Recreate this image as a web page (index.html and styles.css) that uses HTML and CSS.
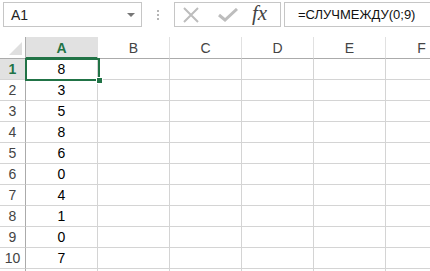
FILE: index.html
```html
<!DOCTYPE html>
<html lang="ru">
<head>
    <meta charset="UTF-8">
    <title>СЛУЧМЕЖДУ</title>
    <link rel="stylesheet" href="styles.css">
</head>
<body>
    <div class="formula-bar">
        <div class="name-box">
            <span class="name-text">A1</span>
            <span class="name-arrow"></span>
        </div>
        <div class="grip">
            <span></span><span></span><span></span>
        </div>
        <div class="buttons-box">
            <svg class="icon-cancel" width="18" height="16" viewBox="0 0 18 16">
                <path d="M2 1 L16 15 M16 1 L2 15" stroke="#bdbdbd" stroke-width="2" fill="none"/>
            </svg>
            <svg class="icon-enter" width="20" height="14" viewBox="0 0 20 14">
                <path d="M1 7 L7 12 L19 1" stroke="#bdbdbd" stroke-width="3" fill="none"/>
            </svg>
            <span class="fx">fx</span>
        </div>
        <div class="formula-input">=СЛУЧМЕЖДУ(0;9)</div>
    </div>

    <div class="sheet">
        <div class="grid">
            <div class="corner"><span class="corner-tri"></span></div>
            <div class="col-head selected">A</div>
            <div class="col-head">B</div>
            <div class="col-head">C</div>
            <div class="col-head">D</div>
            <div class="col-head">E</div>
            <div class="col-head">F</div>

            <div class="row-head selected">1</div><div class="cell num">8</div><div class="cell"></div><div class="cell"></div><div class="cell"></div><div class="cell"></div><div class="cell"></div>
            <div class="row-head">2</div><div class="cell num">3</div><div class="cell"></div><div class="cell"></div><div class="cell"></div><div class="cell"></div><div class="cell"></div>
            <div class="row-head">3</div><div class="cell num">5</div><div class="cell"></div><div class="cell"></div><div class="cell"></div><div class="cell"></div><div class="cell"></div>
            <div class="row-head">4</div><div class="cell num">8</div><div class="cell"></div><div class="cell"></div><div class="cell"></div><div class="cell"></div><div class="cell"></div>
            <div class="row-head">5</div><div class="cell num">6</div><div class="cell"></div><div class="cell"></div><div class="cell"></div><div class="cell"></div><div class="cell"></div>
            <div class="row-head">6</div><div class="cell num">0</div><div class="cell"></div><div class="cell"></div><div class="cell"></div><div class="cell"></div><div class="cell"></div>
            <div class="row-head">7</div><div class="cell num">4</div><div class="cell"></div><div class="cell"></div><div class="cell"></div><div class="cell"></div><div class="cell"></div>
            <div class="row-head">8</div><div class="cell num">1</div><div class="cell"></div><div class="cell"></div><div class="cell"></div><div class="cell"></div><div class="cell"></div>
            <div class="row-head">9</div><div class="cell num">0</div><div class="cell"></div><div class="cell"></div><div class="cell"></div><div class="cell"></div><div class="cell"></div>
            <div class="row-head">10</div><div class="cell num">7</div><div class="cell"></div><div class="cell"></div><div class="cell"></div><div class="cell"></div><div class="cell"></div>
            <div class="row-head"></div><div class="cell"></div><div class="cell"></div><div class="cell"></div><div class="cell"></div><div class="cell"></div><div class="cell"></div>
        </div>
        <div class="selection"><span class="fill-handle"></span></div>
    </div>
</body>
</html>
```

FILE: styles.css
```css
body {
    margin: 0;
    padding: 0;
    width: 430px;
    height: 271px;
    overflow: hidden;
    background-color: white;
    font-family: "Liberation Sans", Arial, sans-serif;
    color: #000;
}
.formula-bar {
    display: flex;
    align-items: stretch;
    height: 25px;
    padding-top: 2px;
}
.name-box {
    box-sizing: border-box;
    width: 139px;
    margin-left: 3px;
    border: 1px solid #c6c6c6;
    display: flex;
    align-items: center;
    justify-content: space-between;
    padding: 0 6px 0 7px;
}
.name-text {
    font-size: 14px;
    color: #222;
}
.name-arrow {
    width: 0;
    height: 0;
    border-left: 4px solid transparent;
    border-right: 4px solid transparent;
    border-top: 4px solid #777;
}
.grip {
    width: 32px;
    display: flex;
    flex-direction: column;
    align-items: center;
    justify-content: center;
    gap: 2px;
}
.grip span {
    width: 2px;
    height: 2px;
    background-color: #b5b5b5;
}
.buttons-box {
    box-sizing: border-box;
    width: 107px;
    border: 1px solid #c6c6c6;
    display: flex;
    align-items: center;
    padding-left: 7px;
}
.icon-cancel {
    margin-right: 18px;
}
.icon-enter {
    margin-right: 14px;
}
.fx {
    font-family: "Liberation Serif", "Times New Roman", serif;
    font-style: italic;
    font-size: 21px;
    color: #444;
    margin-top: -3px;
}
.formula-input {
    box-sizing: border-box;
    flex-grow: 1;
    margin-left: 3px;
    border: 1px solid #c6c6c6;
    border-right: none;
    font-size: 13px;
    color: #111;
    padding-left: 13px;
    display: flex;
    align-items: center;
}
.sheet {
    position: relative;
    margin-top: 10px;
    height: 234px;
    overflow: hidden;
}
.grid {
    display: grid;
    grid-template-columns: 26px repeat(6, 72px);
    grid-template-rows: 22px repeat(11, 21px);
}
.grid > div {
    box-sizing: border-box;
    border-right: 1px solid #d4d4d4;
    border-bottom: 1px solid #d4d4d4;
    display: flex;
    align-items: center;
    justify-content: center;
}
.corner {
    position: relative;
    border-right-color: #ababab !important;
    border-bottom-color: #ababab !important;
}
.corner-tri {
    position: absolute;
    right: 3px;
    bottom: 3px;
    width: 13px;
    height: 13px;
    background-color: #dfdfdf;
    clip-path: polygon(100% 0, 100% 100%, 0 100%);
}
.grid > .col-head {
    font-size: 14px;
    color: #444;
    border-bottom-color: #ababab;
    border-right-color: #e1e1e1;
    padding-top: 1px;
}
.grid > .row-head {
    font-size: 14px;
    color: #444;
    border-right-color: #ababab;
}
.grid > .selected {
    background-color: #e1e1e1;
    color: #217346;
    font-weight: bold;
}
.grid > .col-head.selected {
    border-bottom: 2px solid #217346;
}
.num {
    font-size: 14px;
}
.selection {
    position: absolute;
    left: 25px;
    top: 21px;
    width: 75px;
    height: 23px;
    box-sizing: border-box;
    border: 2px solid #217346;
}
.fill-handle {
    position: absolute;
    right: -5px;
    bottom: -5px;
    width: 5px;
    height: 5px;
    background-color: #217346;
    border: 1px solid white;
}
```
